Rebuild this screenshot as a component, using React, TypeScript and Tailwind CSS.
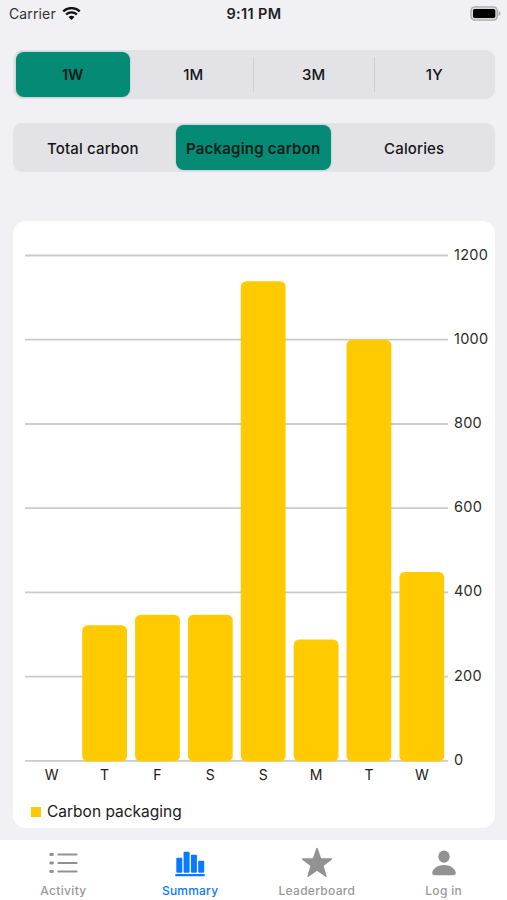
import React from "react";

const ranges = ["1W", "1M", "3M", "1Y"];
const metrics = ["Total carbon", "Packaging carbon", "Calories"];

const ticks = [
  { label: "1200", y: 34.5 },
  { label: "1000", y: 118.7 },
  { label: "800", y: 203 },
  { label: "600", y: 287.2 },
  { label: "400", y: 371.4 },
  { label: "200", y: 455.7 },
  { label: "0", y: 539.9 },
];

const days = [
  { label: "W", top: null },
  { label: "T", top: 404.2 },
  { label: "F", top: 393.7 },
  { label: "S", top: 393.7 },
  { label: "S", top: 60.2 },
  { label: "M", top: 418.4 },
  { label: "T", top: 118.8 },
  { label: "W", top: 350.9 },
];

const StatusBar = () => (
  <header className="flex h-[27px] items-center justify-between pr-[6px] pl-[9px]">
    <div className="flex w-[120px] items-center gap-[6px]">
      <span className="text-[14px] tracking-[0.13px] text-[#303033]">
        Carrier
      </span>
      <svg width="19" height="14" viewBox="0 0 19 14" fill="none">
        <path
          d="M1.2 4.4a12 12 0 0 1 16.6 0M4.1 7.5a7.8 7.8 0 0 1 10.8 0"
          stroke="#111"
          strokeWidth="2.3"
        />
        <path d="M9.5 13.1 6.5 10.1a4.3 4.3 0 0 1 6 0z" fill="#111" />
      </svg>
    </div>
    <span className="-ml-[2px] text-[14.5px] font-semibold tracking-[0.35px] text-[#202022]">
      9:11 PM
    </span>
    <div className="flex w-[120px] justify-end">
      <svg width="31" height="15" viewBox="0 0 31 15">
        <rect
          x="1"
          y="0.9"
          width="26.3"
          height="13.2"
          rx="3.8"
          fill="#d8d8da"
          stroke="#aaaaac"
          strokeWidth="1.3"
        />
        <rect x="3" y="2.9" width="22.3" height="9.2" rx="1.8" fill="#000" />
        <path d="M28.6 5v5c2.4-1 2.4-4 0-5z" fill="#aaaaac" />
      </svg>
    </div>
  </header>
);

type SegmentedProps = {
  items: string[];
  selected: number;
  pill: string;
};

const Segmented = ({ items, selected, pill }: SegmentedProps) => (
  <div className="flex h-[49px] rounded-[9px] bg-[#e3e2e7]">
    {items.map((item, i) => (
      <div
        key={item}
        className={`flex flex-1 basis-0 items-center py-[2px] ${
          i < items.length - 1 && i !== selected && i + 1 !== selected
            ? "bg-[linear-gradient(#cfced3,#cfced3)] bg-[length:1px_35px] bg-[position:right_center] bg-no-repeat"
            : ""
        }`}
      >
        <div
          className={`flex h-full items-center justify-center pt-[2px] text-[15px] whitespace-nowrap ${
            i === selected
              ? `rounded-[8px] bg-[#048a75] font-semibold text-[#071d19] shadow-[0_0_2px_#7cc0b3] ${pill}`
              : "w-full pr-px font-medium tracking-[0.15px] text-[#151517]"
          }`}
        >
          {item}
        </div>
      </div>
    ))}
  </div>
);

const Chart = () => (
  <svg width="482" height="570" viewBox="0 0 482 570" className="block">
    {ticks.map((t) => (
      <g key={t.label}>
        <line
          x1="12"
          x2="435"
          y1={t.y}
          y2={t.y}
          stroke="#cacaca"
          strokeWidth="1.8"
        />
        <text x="441" y={t.y + 4} fontSize="14.5" letterSpacing="0.25" fill="#2c2c2c">
          {t.label}
        </text>
      </g>
    ))}
    {days.map((d, i) => (
      <g key={i}>
        {d.top !== null && (
          <rect
            x={69.2 + (i - 1) * 52.87}
            y={d.top}
            width="44.8"
            height={540.4 - d.top}
            rx="5.5"
            fill="#ffcb00"
          />
        )}
        <text
          x={38.7 + i * 52.87}
          y="559"
          fontSize="14"
          textAnchor="middle"
          fill="#202020"
        >
          {d.label}
        </text>
      </g>
    ))}
  </svg>
);

const ListIcon = () => (
  <svg width="30" height="30" viewBox="0 0 30 30" stroke="#929292" strokeLinecap="round">
    <path d="M10.5 6.5h18M10.5 15h18M10.5 23.5h18" strokeWidth="2.2" />
    <path d="M2.7 6.5h1.8M2.7 15h1.8M2.7 23.5h1.8" strokeWidth="2.8" />
  </svg>
);

const BarsIcon = () => (
  <svg width="30" height="30" viewBox="0 0 30 30" fill="#087aff">
    <rect x="1.3" y="9.7" width="6" height="15" rx="1" />
    <rect x="8.6" y="3.8" width="6" height="20.9" rx="1" />
    <rect x="15.9" y="6.8" width="6" height="17.9" rx="1" />
    <rect x="23.2" y="12.7" width="6" height="12" rx="1" />
    <rect x="0.3" y="26" width="29.4" height="2.3" rx="0.6" />
  </svg>
);

const StarIcon = () => (
  <svg width="32" height="32" viewBox="0 0 32 32" fill="#929292">
    <path
      d="M16 1.6 19.5 11.9 30.3 12 21.6 18.6 24.9 29.2 16 22.9 7.1 29.2 10.4 18.6 1.7 12 12.5 11.9z"
      stroke="#929292"
      strokeWidth="1.6"
      strokeLinejoin="round"
    />
  </svg>
);

const PersonIcon = () => (
  <svg width="26" height="28" viewBox="0 0 26 28" fill="#929292">
    <ellipse cx="13" cy="7.6" rx="5.7" ry="6.1" />
    <path d="M13 15.9c-7.1 0-11.8 4.3-11.8 8.2 0 1.4.9 2.1 2.4 2.1h18.8c1.5 0 2.4-.7 2.4-2.1 0-3.9-4.7-8.2-11.8-8.2z" />
  </svg>
);

const tabs = [
  { label: "Activity", icon: <ListIcon />, style: "text-[#999] tracking-[0.35px]" },
  { label: "Summary", icon: <BarsIcon />, style: "text-[#087aff] tracking-[0.2px]" },
  { label: "Leaderboard", icon: <StarIcon />, style: "text-[#999] tracking-[0.3px]" },
  { label: "Log in", icon: <PersonIcon />, style: "text-[#999] tracking-[0.3px]" },
];

const TabBar = () => (
  <nav className="grid h-[60px] grid-cols-4 bg-white">
    {tabs.map((tab) => (
      <div key={tab.label} className="flex flex-col items-center">
        <div className="flex h-[46px] items-center">{tab.icon}</div>
        <span className={`-mt-[3px] text-[12px] leading-[16px] font-medium ${tab.style}`}>
          {tab.label}
        </span>
      </div>
    ))}
  </nav>
);

export default function App() {
  return (
    <div className="flex h-[900px] w-[507px] flex-col overflow-hidden bg-[#f1f0f5] font-['Inter',sans-serif]">
      <StatusBar />
      <main className="flex-1 pt-[23px] pr-[12px] pl-[13px]">
        <Segmented items={ranges} selected={0} pill="ml-[2.5px] w-[114px]" />
        <div className="h-[24.4px]" />
        <Segmented
          items={metrics}
          selected={1}
          pill="ml-[2px] w-[155px] tracking-[0.22px]"
        />
        <div className="mt-[48.6px] h-[607px] rounded-[13px] bg-white">
          <Chart />
          <div className="flex items-center gap-[6px] pt-[10px] pl-[18px]">
            <span className="size-[10px] bg-[#ffcb00]" />
            <span className="text-[15.5px] leading-[22px] text-[#202020]">
              Carbon packaging
            </span>
          </div>
        </div>
      </main>
      <TabBar />
    </div>
  );
}
